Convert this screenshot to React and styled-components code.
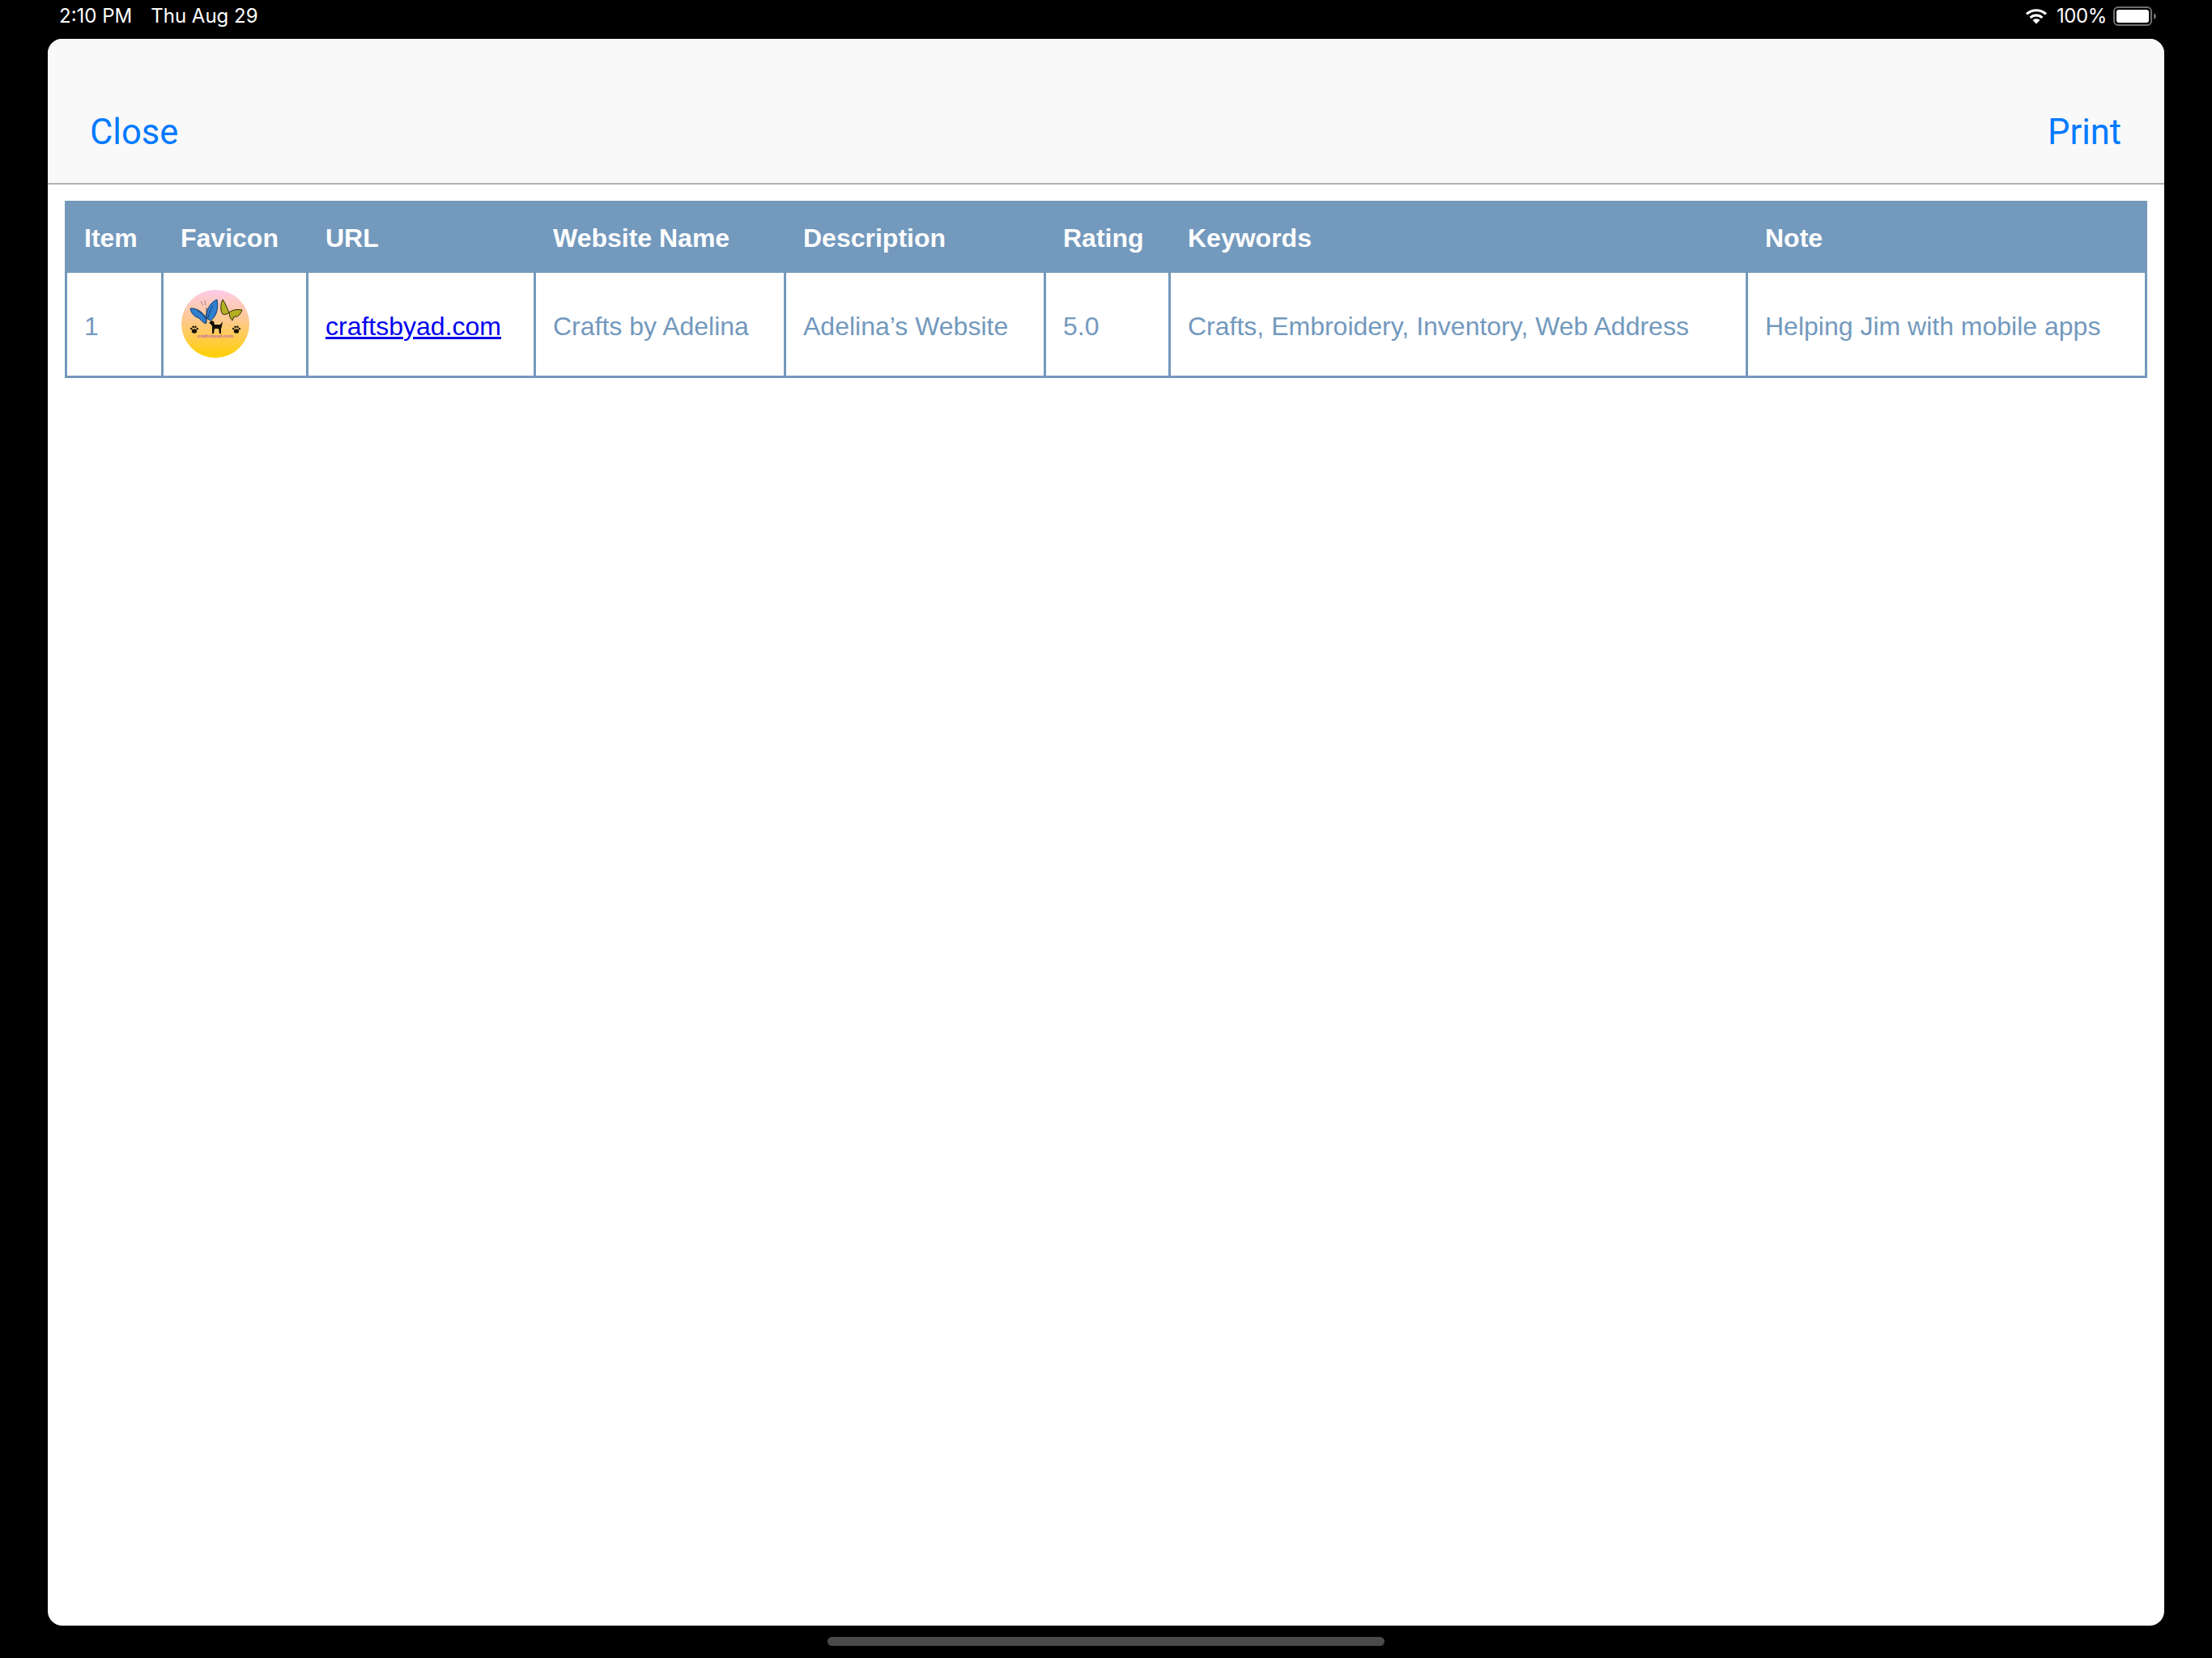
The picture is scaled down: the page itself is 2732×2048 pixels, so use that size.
import React from "react";
import styled, { createGlobalStyle } from "styled-components";

const Global = createGlobalStyle`
  html, body { margin: 0; padding: 0; background: #000; }
  #root { width: 2732px; height: 2048px; }
`;
const Screen = styled.div`
  width: 2732px; height: 2048px; background: #000; display: flex; flex-direction: column; overflow: hidden;
`;
const StatusBar = styled.div`
  height: 48px; flex: none; display: flex; align-items: flex-start; justify-content: space-between;
  padding: 0 68px 0 73px; box-sizing: border-box;
  font-family: Inter, "Liberation Sans", sans-serif; font-size: 24px; line-height: 39px; color: #fff;
`;
const StatusLeft = styled.div` display: flex; gap: 23px; `;
const StatusRight = styled.div` display: flex; align-items: center; height: 39px; `;
const Percent = styled.span` margin: 0 8px 0 11px; letter-spacing: -0.4px; `;
const Sheet = styled.div`
  flex: none; height: 1960px; margin: 0 59px; width: 2614px; background: #fff; border-radius: 18px;
  overflow: hidden; display: flex; flex-direction: column;
`;
const NavBar = styled.div`
  flex: none; height: 180px; box-sizing: border-box; background: #f9f9f9; border-bottom: 2px solid #b2b2b2;
  display: flex; align-items: flex-end; justify-content: space-between; padding: 0 53px 37px 52px;
`;
const NavButton = styled.span`
  font-family: Roboto, "Liberation Sans", sans-serif; font-size: 43.5px; line-height: 50px; color: #007aff;
`;
const TableWrap = styled.div` padding: 20px 21px 0 21px; `;
const Table = styled.table`
  border-collapse: collapse; table-layout: fixed; width: 2569px;
  font-family: "Liberation Sans", Arial, sans-serif; font-size: 32px;
`;
const Col = styled.col` width: ${p => p.$w}px; `;
const Th = styled.th`
  height: 86px; box-sizing: border-box; padding: 4px 21px 0; text-align: left; font-weight: 700; color: #fff;
  background: #7399bd; border: 3px solid #7399bd; white-space: nowrap;
`;
const Td = styled.td`
  height: 130px; box-sizing: border-box; padding: 5px 21px 0; color: #7399bd; font-weight: 400;
  border: 3px solid #7399bd; white-space: nowrap;
`;
const Link = styled.a` color: #0000ee; text-decoration: underline; `;
const HomeBar = styled.div`
  flex: none; width: 688px; height: 11px; border-radius: 6px; background: #4b4b4b; margin: 14px auto 0;
`;
const Favicon = styled.svg` display: block; width: 84px; height: 84px; margin: 0 0 7px 1px; `;

const Wifi = () => (
  <svg width="28" height="20" viewBox="0 0 28 20" fill="none" stroke="#fff" strokeWidth="3.2">
    <path d="M2 7.4C9 1.2 19 1.2 26 7.4" />
    <path d="M6.6 11.8C11 8 17 8 21.4 11.8" />
    <path d="M14 19.6l-4.6-4.8c2.6-2.2 6.6-2.2 9.2 0z" fill="#fff" stroke="none" />
  </svg>
);
const Battery = () => (
  <svg width="54" height="24" viewBox="0 0 54 24">
    <rect x="1" y="1" width="46" height="22" rx="5" fill="none" stroke="#6f6f6f" strokeWidth="2" />
    <rect x="4" y="4" width="40" height="16" rx="3" fill="#fff" />
    <path d="M50 8.500c2 .5 3 2 3 3.500s-1 3-3 3.500z" fill="#6f6f6f" />
  </svg>
);
const Paw = ({ x, y }) => (
  <g transform={`translate(${x} ${y})`} fill="#1a1508">
    <ellipse cx="0" cy="2" rx="3.200" ry="2.800" />
    <circle cx="-3.800" cy="-1" r="1.300" /><circle cx="-1.400" cy="-3.200" r="1.300" />
    <circle cx="1.400" cy="-3.200" r="1.300" /><circle cx="3.800" cy="-1" r="1.300" />
  </g>
);
const FaviconArt = () => (
  <Favicon viewBox="0 0 84 84">
    <defs>
      <linearGradient id="favGrad" x1="0" y1="0" x2="0" y2="1">
        <stop offset="0" stopColor="#fdcbe8" />
        <stop offset="0.45" stopColor="#fec98d" />
        <stop offset="1" stopColor="#ffd000" />
      </linearGradient>
    </defs>
    <circle cx="42" cy="42" r="42" fill="url(#favGrad)" />
    <g fill="#2f7fd0" stroke="#123a66" strokeWidth="1">
      <path d="M31 35C27 28 19 22 11 23C12 29 16 33 22 35C24 38 27 40 30 42Z" />
      <path d="M31 35C30 25 36 15 44 12C46 21 44 33 36 38Z" />
    </g>
    <path d="M31 22L31 41M20 26C24 28 28 32 30 36M39 19C36 25 34 30 33 35" stroke="#123a66" strokeWidth="0.900" fill="none" />
    <path d="M24 14l3 5M29 13l1 6" stroke="#7b5a66" strokeWidth="0.700" />
    <g fill="#b5b020" stroke="#2c2a08" strokeWidth="1">
      <path d="M59 28C56 22 54 16 51 12C48 18 48 26 51 30C54 31 57 30 59 28Z" />
      <path d="M59 28C64 24 70 24 75 25C73 30 70 34 65 33L63 38C61 36 59 33 59 28Z" />
    </g>
    <path d="M34 41L37 38L40 39L41 43L48 43L51 39L50 45L49 48L49 54L47 54L46 48L41 48L40 54L38 54L38 45L36 42Z" fill="#141008" />
    <Paw x="16" y="49" /><Paw x="68" y="49" />
    <text x="42" y="59" textAnchor="middle" fontFamily="Liberation Sans, sans-serif" fontSize="6" fontWeight="700" fill="#c26bb0">craftsbyad.com</text>
  </Favicon>
);

const widths = [119, 179, 281, 309, 321, 154, 713, 493];
const heads = ["Item", "Favicon", "URL", "Website Name", "Description", "Rating", "Keywords", "Note"];

export default function App() {
  return (
    <Screen>
      <Global />
      <StatusBar>
        <StatusLeft><span>2:10 PM</span><span>Thu Aug 29</span></StatusLeft>
        <StatusRight><Wifi /><Percent>100%</Percent><Battery /></StatusRight>
      </StatusBar>
      <Sheet>
        <NavBar><NavButton>Close</NavButton><NavButton>Print</NavButton></NavBar>
        <TableWrap>
          <Table>
            <colgroup>{widths.map((w, i) => <Col key={i} $w={w} />)}</colgroup>
            <thead><tr>{heads.map(h => <Th key={h}>{h}</Th>)}</tr></thead>
            <tbody>
              <tr>
                <Td>1</Td>
                <Td><FaviconArt /></Td>
                <Td><Link href="#">craftsbyad.com</Link></Td>
                <Td>Crafts by Adelina</Td>
                <Td>Adelina’s Website</Td>
                <Td>5.0</Td>
                <Td>Crafts, Embroidery, Inventory, Web Address</Td>
                <Td>Helping Jim with mobile apps</Td>
              </tr>
            </tbody>
          </Table>
        </TableWrap>
      </Sheet>
      <HomeBar />
    </Screen>
  );
}
